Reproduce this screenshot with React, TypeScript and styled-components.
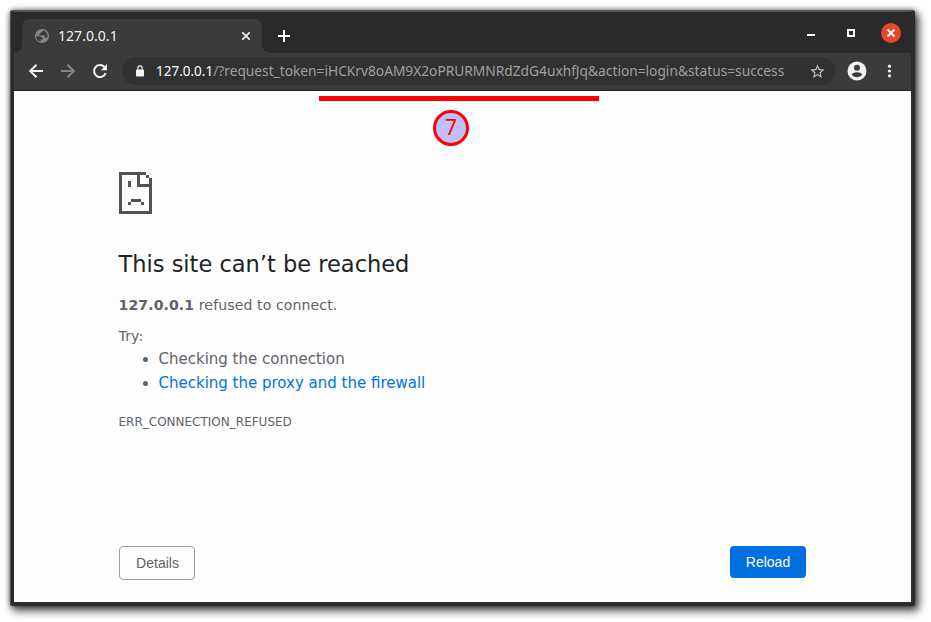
import React from 'react';
import styled, { createGlobalStyle } from 'styled-components';
import { MdStarBorder } from 'react-icons/md';

const GlobalStyle = createGlobalStyle`
  * { box-sizing: border-box; }
  html, body { margin: 0; background: #fff; overflow: hidden; }
`;

const Desktop = styled.main`
  width: 931px;
  height: 622px;
  padding: 10px 16px 16px 10px;
  background: #fff;
`;

const Window = styled.section`
  position: relative;
  width: 905px;
  height: 596px;
  display: flex;
  flex-direction: column;
  background: #2b2b2b;
  border: solid #2b2b2b;
  border-width: 2px 4px 4px;
  border-top-color: #545656;
  border-radius: 3px;
  box-shadow: 0 0 5px rgba(0, 0, 0, 0.45), 3px 4px 8px 1px rgba(0, 0, 0, 0.7);
  font-family: "Noto Sans", sans-serif;
  &::before {
    content: "";
    position: absolute;
    inset: -1px auto -3px -4px;
    width: 1px;
    background: #505252;
  }
`;

const TitleBar = styled.header`
  height: 41px;
  display: flex;
  align-items: flex-end;
  background: #2a2a2a;
`;

const Tab = styled.div`
  position: relative;
  width: 240px;
  height: 34px;
  margin-left: 8px;
  padding: 0 12px;
  display: flex;
  align-items: center;
  background: #3b3b3b;
  border-radius: 8px 8px 0 0;
  color: #f1f1f1;
  &::before, &::after {
    content: "";
    position: absolute;
    bottom: 0;
    width: 8px;
    height: 8px;
  }
  &::before { left: -8px; background: radial-gradient(circle at 0 0, transparent 7.5px, #3b3b3b 8px); }
  &::after { right: -8px; background: radial-gradient(circle at 100% 0, transparent 7.5px, #3b3b3b 8px); }
`;

const TabTitle = styled.span`
  flex: 1;
  margin-left: 8px;
  font-size: 14.1px;
  line-height: 20px;
`;

const NewTab = styled.div`
  width: 44px;
  height: 34px;
  display: grid;
  place-items: center;
`;

const WindowControls = styled.div`
  height: 41px;
  margin-left: auto;
  padding-right: 10px;
  display: flex;
  align-items: center;
  svg { display: block; }
`;

const Toolbar = styled.nav`
  height: 38px;
  padding-bottom: 1px;
  display: flex;
  align-items: center;
  background: #3b3b3b;
  border-bottom: 1px solid #242424;
  color: #f3f3f3;
  svg { flex: none; }
`;

const NavIcons = styled.div`
  display: flex;
  gap: 12px;
  padding-left: 12px;
`;

const NavIcon = styled.svg<{ $muted?: boolean }>`
  width: 20px;
  height: 20px;
  fill: none;
  stroke: ${({ $muted }) => ($muted ? '#858585' : '#f3f3f3')};
  stroke-width: 2px;
`;

const AddressBar = styled.div`
  width: 713px;
  height: 28px;
  margin-left: 12px;
  padding: 0 9.5px 0 14px;
  display: flex;
  align-items: center;
  border-radius: 14px;
  background: #313131;
`;

const Url = styled.span`
  flex: 1;
  margin-left: 12px;
  white-space: nowrap;
  font-size: 13.74px;
  line-height: 20px;
  color: #a0a0a0;
`;

const Host = styled.span`
  font-size: 13.5px;
  color: #fff;
`;

const ToolbarEnd = styled.div`
  display: flex;
  align-items: center;
  gap: 18px;
  margin: 0 17px 0 auto;
`;

const Page = styled.article`
  flex: 1;
  padding: 81px 105px 0;
  background: #fdfdfd;
  color: #5f6368;
  font-family: "DejaVu Sans", sans-serif;
  font-size: 14.08px;
`;

const SadPage = styled.svg`
  display: block;
  width: 33px;
  height: 42px;
`;

const Copy = styled.div`
  margin-left: -0.5px;
`;

const Heading = styled.h1`
  margin: 36px 0 0;
  font-size: 22.5px;
  line-height: 28px;
  font-weight: 400;
  color: #202124;
`;

const Paragraph = styled.p<{ $top: number }>`
  margin: ${({ $top }) => $top}px 0 0;
  line-height: 20px;
  letter-spacing: 0.1px;
`;

const Suggestions = styled.ul`
  margin: 1px 0 0;
  padding-left: 40px;
  font-size: 15px;
  line-height: 24px;
`;

const Link = styled.a`
  color: #0072e3;
`;

const ErrorCode = styled.div`
  margin-top: 17px;
  font-size: 12px;
  line-height: 20px;
`;

const Actions = styled.div`
  display: flex;
  align-items: flex-start;
  justify-content: space-between;
  width: 687px;
  margin-top: 114px;
`;

const Button = styled.button<{ $primary?: boolean }>`
  width: 76px;
  height: ${({ $primary }) => ($primary ? 32 : 34)}px;
  padding: 0 0 0 ${({ $primary }) => ($primary ? 0 : 1)}px;
  border: ${({ $primary }) => ($primary ? '0' : '1px solid #9aa0a6')};
  border-radius: 4px;
  background: ${({ $primary }) => ($primary ? '#0070e0' : '#fdfdfd')};
  color: ${({ $primary }) => ($primary ? '#fff' : '#5f6368')};
  font: 14px "Liberation Sans", sans-serif;
`;

const Underline = styled.div`
  position: absolute;
  left: 305px;
  top: 84px;
  width: 280px;
  height: 5px;
  background: #f00;
`;

const StepBadge = styled.div`
  position: absolute;
  left: 419px;
  top: 98px;
  width: 36px;
  height: 36px;
  border: 3px solid #f00;
  border-radius: 50%;
  background: #c0c0ff;
  color: #f00;
  font-size: 21px;
  line-height: 29px;
  text-align: center;
`;

export default function App() {
  return (
    <Desktop>
      <GlobalStyle />
      <Window>
        <TitleBar>
          <Tab>
            <svg width="16" height="16" viewBox="0 0 16 16">
              <circle cx="8" cy="8" r="7" fill="#858585" />
              <path d="M2.2 8.2h3.3c1.4 0 2 .8 2 1.8H9v1.6H6.7v2.2A5.7 5.7 0 0 1 2.2 8.2ZM8.6 2.2v1c0 .8-.6 1.2-1.3 1.2H6.2V6H5v1.2h4.4c.8 0 1.2.5 1.2 1.1v1.2h1.2c.6 0 1 .3 1.2.8A5.8 5.8 0 0 0 8.6 2.2Z" fill="#3b3b3b" />
            </svg>
            <TabTitle>127.0.0.1</TabTitle>
            <svg width="8" height="8" viewBox="0 0 8 8" stroke="#f1f1f1" strokeWidth="1.7"><path d="m.3.3 7.4 7.4M7.7.3.3 7.7" /></svg>
          </Tab>
          <NewTab><svg width="12" height="12" viewBox="0 0 12 12" stroke="#fff" strokeWidth="2"><path d="M6 0v12M0 6h12" /></svg></NewTab>
          <WindowControls>
            <svg width="94" height="20" viewBox="0 0 94 20" fill="none">
              <path d="M0 12h8" stroke="#fff" strokeWidth="2" />
              <path d="M41 7h6v6h-6z" stroke="#fff" strokeWidth="2" />
              <circle cx="84" cy="10" r="10" fill="#e9472b" />
              <path d="m80.5 6.5 7 7m0-7-7 7" stroke="#fff" strokeWidth="2" />
            </svg>
          </WindowControls>
        </TitleBar>
        <Toolbar>
          <NavIcons>
            <NavIcon viewBox="0 0 20 20"><path d="M17 10H4.5M10.5 3.7 4.2 10l6.3 6.3" /></NavIcon>
            <NavIcon viewBox="0 0 20 20" $muted><path d="M3 10h12.5M9.5 3.7l6.3 6.3-6.3 6.3" /></NavIcon>
            <NavIcon viewBox="0 0 20 20">
              <path d="M15.7 12A6 6 0 1 1 14.4 5.9" />
              <path d="M17 3v6.2h-6.2z" fill="#f3f3f3" stroke="none" />
            </NavIcon>
          </NavIcons>
          <AddressBar>
            <svg width="8" height="12" viewBox="0 0 8 12">
              <rect y="4.5" width="8" height="7" rx="0.8" fill="#f1f1f1" />
              <path d="M1.9 5V3a2.1 2.1 0 0 1 4.2 0v2" fill="none" stroke="#f1f1f1" strokeWidth="1.2" />
            </svg>
            <Url><Host>127.0.0.1</Host>/?request_token=iHCKrv8oAM9X2oPRURMNRdZdG4uxhfJq&amp;action=login&amp;status=success</Url>
            <MdStarBorder size={17} color="#c4c4c4" />
          </AddressBar>
          <ToolbarEnd>
            <svg width="20" height="20" viewBox="0 0 20 20">
              <circle cx="10" cy="10" r="9.5" fill="#f3f3f3" />
              <circle cx="10" cy="6.8" r="3" fill="#3b3b3b" />
              <path d="M4.6 13.6c1-1.6 3.2-2.4 5.4-2.4s4.4.8 5.4 2.4c-1.2 1.7-3.2 2.6-5.4 2.6s-4.2-.9-5.4-2.6Z" fill="#3b3b3b" />
            </svg>
            <svg width="9" height="14" viewBox="0 0 9 14" fill="#f3f3f3">
              <circle cx="4.5" cy="2.2" r="1.6" /><circle cx="4.5" cy="7" r="1.6" /><circle cx="4.5" cy="11.8" r="1.6" />
            </svg>
          </ToolbarEnd>
        </Toolbar>
        <Page>
          <SadPage viewBox="0 0 33 42" fill="#535353" shapeRendering="crispEdges">
            <path d="M0 0h27v3H3v36h27V15H18V3h3v9h9V6h3v36H0zM27 3h3v3h-3zM9 9h3v6H9zM12 27h10v3H12zM9 30h3v3H9zM22 30h3v3h-3z" />
          </SadPage>
          <Copy>
            <Heading>This site can’t be reached</Heading>
            <Paragraph $top={17}><b>127.0.0.1</b> refused to connect.</Paragraph>
            <Paragraph $top={11}>Try:</Paragraph>
            <Suggestions>
              <li>Checking the connection</li>
              <li><Link>Checking the proxy and the firewall</Link></li>
            </Suggestions>
            <ErrorCode>ERR_CONNECTION_REFUSED</ErrorCode>
          </Copy>
          <Actions>
            <Button>Details</Button>
            <Button $primary>Reload</Button>
          </Actions>
        </Page>
        <Underline />
        <StepBadge>7</StepBadge>
      </Window>
    </Desktop>
  );
}
